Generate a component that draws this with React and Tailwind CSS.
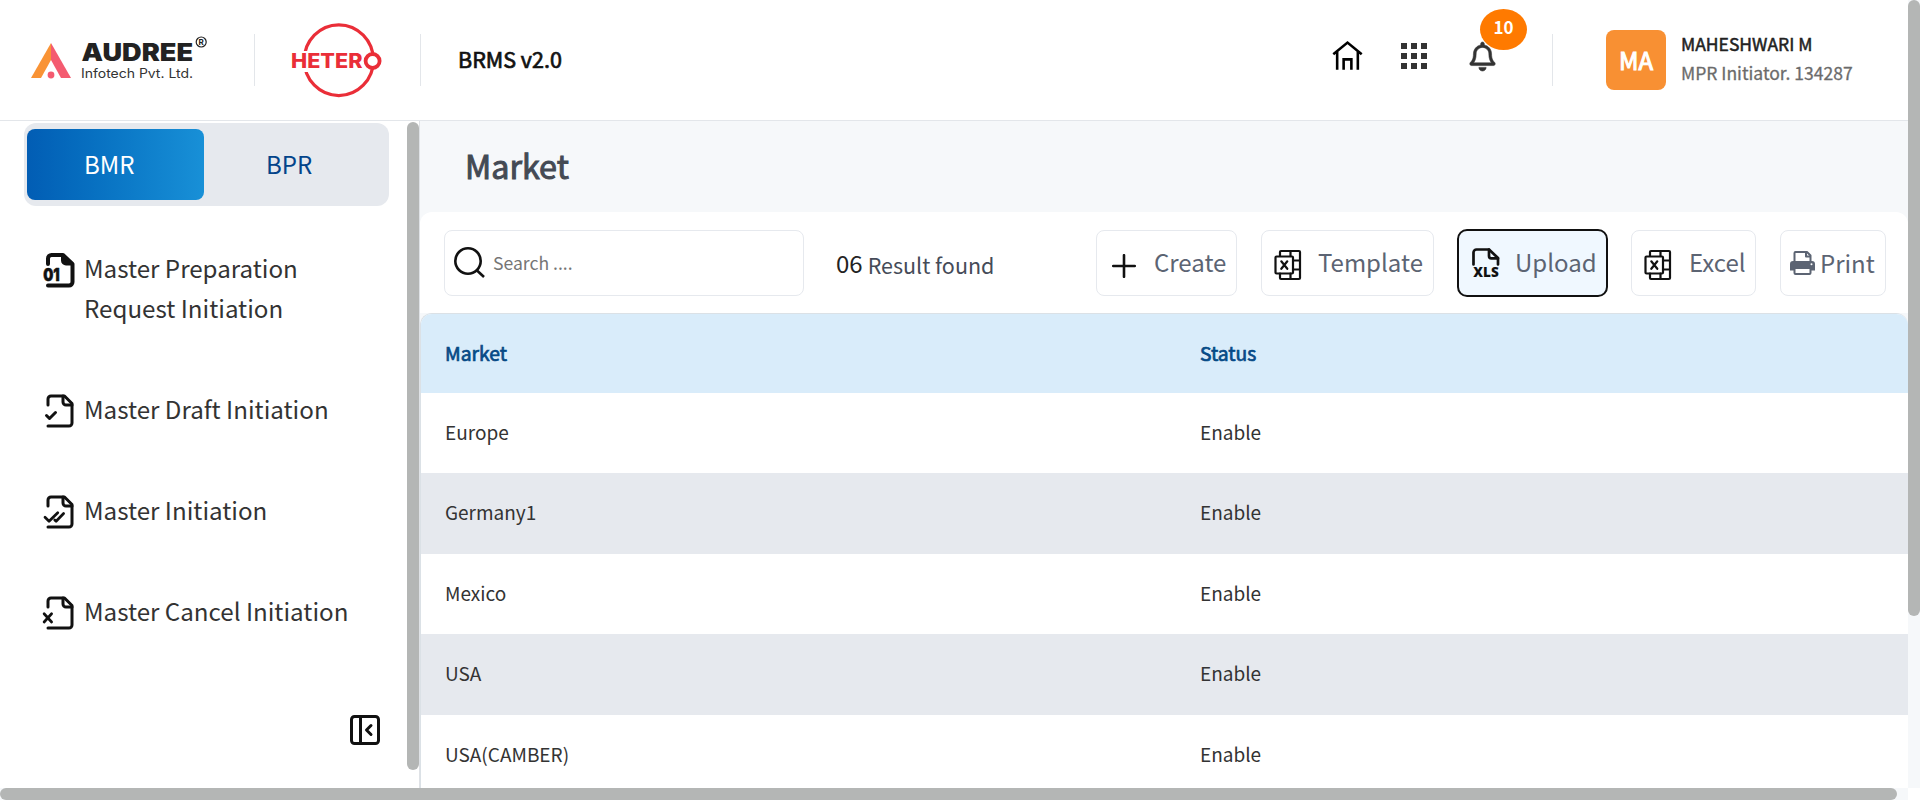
import React from "react";
import { FaRegBell } from "react-icons/fa";
import { GrHome } from "react-icons/gr";
import { LuFileCheck2, LuPanelLeftClose } from "react-icons/lu";

function AudreeLogo() {
  return (
    <svg width="180" height="50" viewBox="0 0 180 50" className="block shrink-0">
      <path d="M1 43 21 8v17L11 43z" fill="#f99335" />
      <path d="M21 8 41 43H31L21 25z" fill="#f45b70" />
      <circle cx="21" cy="40" r="3.4" fill="#f45b70" />
      <text x="51.500" y="26.4" textLength="111.5" lengthAdjust="spacingAndGlyphs" fontFamily="Inter, sans-serif" fontWeight="900" fontSize="24" fill="#222">AUDREE</text>
      <text x="51" y="43.2" textLength="112" lengthAdjust="spacingAndGlyphs" fontFamily="Inter, sans-serif" fontSize="12.8" fill="#333">Infotech Pvt. Ltd.</text>
      <circle cx="171.2" cy="7" r="5" fill="none" stroke="#222" strokeWidth="1.2" />
      <text x="168.4" y="10" fontFamily="Inter, sans-serif" fontWeight="700" fontSize="8" fill="#222">R</text>
    </svg>
  );
}

function HeteroLogo() {
  return (
    <svg width="92" height="76" viewBox="0 0 92 76" className="block shrink-0">
      <ellipse cx="47.800" cy="38.200" rx="34.600" ry="35.400" fill="none" stroke="#ea2e38" strokeWidth="3.2" />
      <rect x="0" y="29" width="30" height="21" fill="#fff" />
      <text x="0" y="46.4" textLength="71.5" lengthAdjust="spacingAndGlyphs" fontFamily="Inter, sans-serif" fontWeight="800" fontSize="19.8" fill="#ea2e38">HETER</text>
      <circle cx="81.600" cy="39" r="7" fill="#fff" stroke="#ea2e38" strokeWidth="3.800" />
    </svg>
  );
}

function BinaryFile() {
  return (
    <svg width="36" height="36" viewBox="0 0 36 36" fill="none" stroke="currentColor" strokeWidth="4" strokeLinecap="round" strokeLinejoin="round">
      <path d="M6 12V6.500a3.500 3.500 0 0 1 3.500-3.500H21l9.500 9V30a3.500 3.500 0 0 1-3.500 3.500H6" />
      <path d="M21 4v4.500a3 3 0 0 0 3 3h5z" fill="currentColor" />
      <text x="1.200" y="28.500" textLength="16.500" lengthAdjust="spacingAndGlyphs" fontFamily="Inter, sans-serif" fontWeight="900" fontSize="17" fill="currentColor" stroke="currentColor" strokeWidth="0.500">01</text>
    </svg>
  );
}

function LineFile({ children }) {
  return (
    <svg width="36" height="36" viewBox="0 0 24 24" fill="none" stroke="currentColor" strokeWidth="2" strokeLinecap="round" strokeLinejoin="round" className="overflow-visible">
      <path d="M4 22h14a2 2 0 0 0 2-2V7l-5-5H6a2 2 0 0 0-2 2v4" />
      <path d="M14 2v4a2 2 0 0 0 2 2h4" />
      {children}
    </svg>
  );
}

function ExcelIcon() {
  return (
    <svg width="28" height="32" viewBox="0 0 28 32" fill="none" stroke="#111" strokeWidth="2.200" strokeLinejoin="round" strokeLinecap="round" className="mt-1">
      <path d="M6 6.500V3a1 1 0 0 1 1-1h18a1 1 0 0 1 1 1v26a1 1 0 0 1-1 1H7a1 1 0 0 1-1-1v-4.500M16.500 2v5M16.500 24.500V30M19.500 11.500H26M19.500 20.500H26" />
      <rect x="1.500" y="7.500" width="17.500" height="17" rx="1" />
      <path d="m7.300 12.300 6 7.500M13.300 12.300l-6 7.500" />
    </svg>
  );
}

function XlsIcon() {
  return (
    <svg width="32" height="36" viewBox="0 0 32 36" fill="none" stroke="#111" strokeWidth="2.700" strokeLinejoin="round" strokeLinecap="round">
      <path d="M2.500 19.500V7.500a3 3 0 0 1 3-3H18l9 8.500v6.500" />
      <path d="M18 4.500V11a2.300 2.300 0 0 0 2.300 2.300H27" />
      <text x="2.300" y="31.800" textLength="25.500" lengthAdjust="spacing" fontFamily="Open Sans, sans-serif" fontWeight="800" fontSize="13.500" fill="#111" stroke="none">XLS</text>
    </svg>
  );
}

function PrintIcon() {
  return (
    <svg width="25" height="24" viewBox="0 0 25 24" fill="none" stroke="currentColor" strokeWidth="2" strokeLinejoin="round">
      <path d="M4.500 11V2a1 1 0 0 1 1-1H17l3.500 3.500V11" />
      <path d="M16 1v4.500h4.500" />
      <path d="M3 10h19a3 3 0 0 1 3 3v6.500h-4V17H4v2.500H0V13a3 3 0 0 1 3-3z" fill="currentColor" stroke="none" />
      <rect x="4.500" y="17" width="16" height="6" rx="1" fill="#fff" />
      <circle cx="21.500" cy="13.300" r="1" fill="#fff" stroke="none" />
    </svg>
  );
}

const menu = [
  { label: "Master Preparation Request Initiation", icon: <BinaryFile />, cls: "h-[141px]" },
  { label: "Master Draft Initiation", icon: <LuFileCheck2 size={36} />, cls: "h-[101px]" },
  { label: "Master Initiation", icon: <LineFile><path d="m2 15.500 2.700 2.700 5.800-5.700M8.500 17.300l.9.900 5-5.200" strokeWidth="1.800" /></LineFile>, cls: "h-[101px]" },
  { label: "Master Cancel Initiation", icon: <LineFile><path d="m1.400 12.500 5 5.500M6.400 12.500l-5 5.500" strokeWidth="1.800" /></LineFile>, cls: "h-[101px]" },
];

const rows = [
  ["Europe", "h-[80px] bg-white"],
  ["Germany1", "h-[81px] bg-[#e6e9ee]"],
  ["Mexico", "h-[80px] bg-white"],
  ["USA", "h-[81px] bg-[#e6e9ee]"],
  ["USA(CAMBER)", "h-[80px] bg-white"],
];

function Btn({ className, children }) {
  return (
    <button className={"flex h-[66px] items-center rounded-lg border border-[#e6e9ee] text-2xl text-[#5c6473] " + className}>
      {children}
    </button>
  );
}

function Header() {
  return (
    <header className="flex h-[121px] shrink-0 items-center border-b border-[#e3e6ea] bg-white pl-[30px]">
      <AudreeLogo />
      <div className="ml-11 h-[52px] w-px bg-[#e3e6ea]" />
      <div className="ml-9"><HeteroLogo /></div>
      <div className="ml-[37px] h-[52px] w-px bg-[#e3e6ea]" />
      <div className="-mt-0.5 ml-[37px] text-[21.5px] leading-8 text-[#111] [-webkit-text-stroke:0.7px_#111]">BRMS v2.0</div>
      <div className="ml-auto flex items-center">
        <GrHome size={31} className="-mt-2.5 text-black" />
        <svg width="26" height="26" viewBox="0 0 26 26" fill="#333" className="-mt-2 ml-[38px]">
          {[0, 10, 20].map((y) => [0, 10, 20].map((x) => <rect key={x + "-" + y} x={x} y={y} width="6" height="6" />))}
        </svg>
        <div className="relative -mt-2 ml-[41px]">
          <FaRegBell size={29} stroke="#333" strokeWidth={10} className="overflow-visible text-[#333]" />
          <span className="absolute -top-[33px] left-3 flex h-[41px] w-[47px] items-center justify-center rounded-[50%] bg-[#ff7a00] text-[17px] font-bold text-white">
            <span className="-mt-1">10</span>
          </span>
        </div>
        <div className="ml-[55px] h-[52px] w-px bg-[#e3e6ea]" />
        <div className="ml-[53px] flex size-[60px] items-center justify-center rounded-lg bg-[#f89033] text-2xl text-white [-webkit-text-stroke:1px_#fff]">MA</div>
        <div className="-mt-[5px] ml-[15px] w-[227px] text-[17.5px] leading-[29px]">
          <div className="text-[#222] [-webkit-text-stroke:0.5px_#222]">MAHESHWARI M</div>
          <div className="text-[#6b6b6b] [-webkit-text-stroke:0.3px_#6b6b6b]">MPR Initiator. 134287</div>
        </div>
      </div>
    </header>
  );
}

function Sidebar() {
  return (
    <aside className="flex w-[420px] shrink-0 justify-between border-r border-[#dfe2e6] bg-white">
      <div className="w-[392px] pl-6">
        <div className="mt-0.5 flex h-[83px] w-[365px] items-center rounded-xl bg-[#e6e9ee] pl-[3px] text-2xl">
          <div className="flex h-[71px] w-[177px] items-center rounded-lg bg-linear-to-r from-[#025db4] to-[#1890d7] pb-0.5 pl-[57px] text-white">BMR</div>
          <div className="pb-0.5 pl-[62px] text-[#03448a]">BPR</div>
        </div>
        <nav className="pt-[42px]">
          {menu.map((m) => (
            <div key={m.label} className={"flex pl-[18px] text-[24.150px] leading-10 text-[#333] " + m.cls}>
              <span className="mt-1 w-[42px] shrink-0 text-[#111]">{m.icon}</span>
              <span className={m.label.length > 30 ? "w-[240px]" : "whitespace-nowrap"}>{m.label}</span>
            </div>
          ))}
        </nav>
        <LuPanelLeftClose size={36} className="ml-[323px] mt-5 text-[#111]" />
      </div>
      <div className="mt-px h-[648px] w-3 rounded-full bg-[#b4b6b5]" />
    </aside>
  );
}

function Content() {
  return (
    <main className="min-w-0 flex-1 bg-[#f6f8fa]">
      <h1 className="flex h-[91px] items-center pb-[3px] pl-[45px] text-[32.3px] text-[#444a54] [-webkit-text-stroke:1px_#444a54]">Market</h1>
      <div className="rounded-t-xl bg-white">
        <div className="flex h-[101px] items-start pl-6 pr-[22px] pt-[18px]">
          <div className="flex h-[66px] w-[360px] items-center rounded-lg border border-[#e6e9ee] pl-[9px]">
            <svg width="32" height="32" viewBox="0 0 32 32" fill="none" stroke="#111" strokeWidth="2.600">
              <circle cx="14" cy="14" r="12.700" />
              <path d="m22.500 23 7.500 7" />
            </svg>
            <span className="ml-[7px] text-[17.6px] text-[#757575]">Search ....</span>
          </div>
          <div className="ml-8 flex h-[66px] items-center text-2xl text-[#222]">
            <span>06</span><span className="ml-[5px] mt-1 text-[21.500px] text-[#454b58]">Result found</span>
          </div>
          <div className="ml-auto flex items-start gap-6">
            <Btn className="w-[141px] pl-[15px]">
              <svg width="24" height="24" viewBox="0 0 24 24" stroke="#111" strokeWidth="2.600" strokeLinecap="round" className="mt-1.5"><path d="M1.200 12h21.600M12 1.200v21.600" /></svg>
              <span className="-mt-0.5 ml-[18px]">Create</span>
            </Btn>
            <Btn className="w-[173px] pl-3">
              <ExcelIcon />
              <span className="-mt-0.5 ml-4">Template</span>
            </Btn>
            <button className="-mx-px -mt-px flex h-[68px] w-[151px] items-center rounded-[10px] border-[2.500px] border-[#111] bg-[#f0f8ff] pl-3 text-2xl text-[#5c6473]">
              <XlsIcon />
              <span className="-mt-0.5 ml-3">Upload</span>
            </button>
            <Btn className="w-[125px] pl-3">
              <ExcelIcon />
              <span className="-mt-0.5 ml-[17px]">Excel</span>
            </Btn>
            <Btn className="w-[106px] pl-[9px]">
              <PrintIcon />
              <span className="ml-[5px]">Print</span>
            </Btn>
          </div>
        </div>
      </div>
      <div className="overflow-hidden rounded-t-xl border-l border-t border-[#dbe1e6] bg-white text-[19px] text-[#333]">
        <div className="grid h-[79px] grid-cols-[755px_1fr] items-center bg-[#d9ecfa] pl-6 text-[19.300px] text-[#064a86] [-webkit-text-stroke:0.7px_#064a86]">
          <span>Market</span><span>Status</span>
        </div>
        {rows.map(([name, cls]) => (
          <div key={name} className={"grid grid-cols-[755px_1fr] items-center pb-0.5 pl-6 " + cls}>
            <span>{name}</span><span>Enable</span>
          </div>
        ))}
      </div>
    </main>
  );
}

export default function App() {
  return (
    <div className="flex h-[800px] w-[1920px] flex-col overflow-hidden bg-white font-['Noto_Sans_CJK_SC',sans-serif]">
      <div className="flex h-[788px] shrink-0">
        <div className="flex w-[1908px] flex-col overflow-hidden">
          <Header />
          <div className="flex min-h-0 flex-1 overflow-hidden">
            <Sidebar />
            <Content />
          </div>
        </div>
        <div className="w-3 bg-[#f6f8fa]"><div className="h-[616px] rounded-full bg-[#b4b6b5]" /></div>
      </div>
      <div className="h-3 w-[1908px] bg-[#f6f8fa]"><div className="h-3 w-[1897px] rounded-full bg-[#b4b6b5]" /></div>
    </div>
  );
}
